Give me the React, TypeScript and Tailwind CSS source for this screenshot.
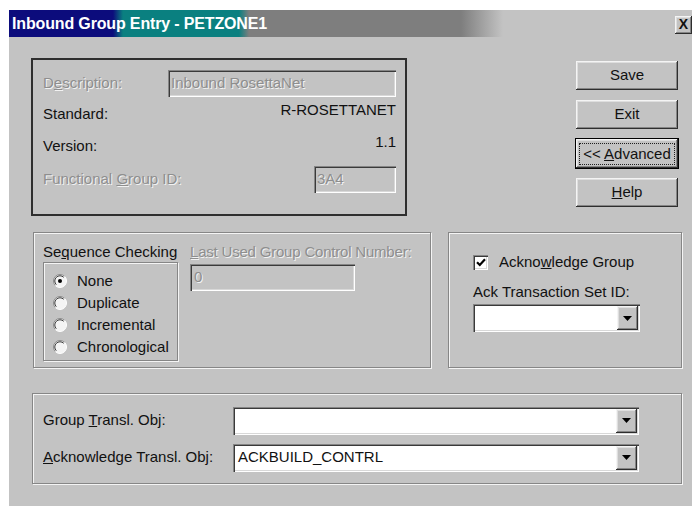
import React from "react";

// Win9x style bevels
const raised =
  "bg-[#c3c3c3] shadow-[inset_-1px_-1px_0_#2e2e2e,inset_1px_1px_0_#f4f4f4,inset_-2px_-2px_0_#858585,inset_2px_2px_0_#dedede]";
const sunken =
  "shadow-[inset_1px_1px_0_#858585,inset_2px_2px_0_#3a3a3a,inset_-1px_-1px_0_#ffffff,inset_-2px_-2px_0_#d8d8d8]";
const etched = "border border-[#868686] shadow-[1px_1px_0_#f4f4f4,inset_1px_1px_0_#f4f4f4]";
const disabledText = "text-[#8e8e8e] [text-shadow:1px_1px_0_#f2f2f2]";

const Btn = ({ children, focused }: { children: React.ReactNode; focused?: boolean }) => (
  <div
    className={`h-[29px] w-[102px] flex items-center justify-center ${raised} ${
      focused ? "outline outline-1 outline-black" : ""
    }`}
  >
    {focused ? (
      <span className="border border-dotted border-[#202020] px-[1px] leading-[20px] w-[96px] text-center">
        {children}
      </span>
    ) : (
      children
    )}
  </div>
);

const Arrow = () => (
  <div className={`h-full w-[21px] flex items-center justify-center ${raised}`}>
    <svg width="9" height="5" viewBox="0 0 9 5">
      <path d="M0 0H9L4.5 5Z" fill="#000" />
    </svg>
  </div>
);

const Combo = ({ value, w }: { value?: string; w: string }) => (
  <div className={`h-[28px] ${w} bg-white ${sunken} flex items-stretch p-[2px]`}>
    <div className="flex-1 flex items-center pl-[3px]">{value}</div>
    <Arrow />
  </div>
);

const Radio = ({ checked, label }: { checked?: boolean; label: string }) => (
  <div className="h-[22px] flex items-center gap-[10px]">
    <svg width="14" height="14" viewBox="0 0 14 14">
      <circle cx="7" cy="7" r="6.5" fill="#f4f4f4" />
      <path d="M2.4 11.6A6.5 6.5 0 0 1 11.6 2.4" stroke="#8a8a8a" strokeWidth="1" fill="none" />
      <path d="M3.3 10.7A5.2 5.2 0 0 1 10.7 3.3" stroke="#3c3c3c" strokeWidth="1" fill="none" />
      <path d="M11.6 2.4A6.5 6.5 0 0 1 2.4 11.6" stroke="#ffffff" strokeWidth="1" fill="none" />
      {checked && <circle cx="7" cy="7" r="2" fill="#000" />}
    </svg>
    <span>{label}</span>
  </div>
);

export default function App() {
  return (
    <div
      className="w-[692px] h-[506px] bg-white pl-[9px] pt-[10px] overflow-hidden text-[15px] text-[#111]"
      style={{ fontFamily: '"Liberation Sans", Arial, sans-serif' }}
    >
      <div className="w-[683px] h-[496px] bg-[#c3c3c3] flex flex-col">
        {/* caption bar */}
        <div className="h-[27px] flex items-center bg-[linear-gradient(to_right,#0c0c7c_0px,#0c0c7c_104px,#0a8080_114px,#0a8080_230px,#7e7e7e_240px,#7e7e7e_452px,#c3c3c3_494px)]">
          <span className="pl-[3px] text-white font-bold text-[16px] tracking-[-0.15px]">
            Inbound Group Entry - PETZONE1
          </span>
          <div
            className={`ml-auto mt-[2px] h-[18px] w-[17px] flex items-center justify-center font-bold text-[14px] ${raised}`}
          >
            X
          </div>
        </div>

        <div className="flex flex-col pl-[22px]">
          {/* header info + buttons */}
          <div className="flex mt-[21px]">
            <div className="w-[376px] h-[158px] border-2 border-[#2e2e2e] pl-[10px] pr-[9px] pt-[10px] flex flex-col">
              <div className="h-[27px] flex items-center justify-between">
                <span className={disabledText}>
                  D<u>e</u>scription:
                </span>
                <div className={`w-[228px] h-[27px] ${sunken} flex items-center pl-[3px] ${disabledText}`}>
                  Inbound RosettaNet
                </div>
              </div>
              <div className="mt-[4px] h-[26px] flex items-center justify-between">
                <span>Standard:</span>
                <span className="-mt-[8px]">R-ROSETTANET</span>
              </div>
              <div className="mt-[6px] h-[26px] flex items-center justify-between">
                <span>Version:</span>
                <span className="-mt-[8px]">1.1</span>
              </div>
              <div className="mt-[7px] h-[27px] flex items-center justify-between">
                <span className={disabledText}>
                  Functional <u>G</u>roup ID:
                </span>
                <div className={`w-[82px] h-[27px] ${sunken} flex items-center pl-[3px] ${disabledText}`}>
                  3A4
                </div>
              </div>
            </div>

            <div className="ml-[169px] pt-[3px] flex flex-col gap-[10px]">
              <Btn>Save</Btn>
              <Btn>Exit</Btn>
              <Btn focused>
                &lt;&lt; <u>A</u>dvanced
              </Btn>
              <Btn>
                <span>
                  <u>H</u>elp
                </span>
              </Btn>
            </div>
          </div>

          {/* sequence checking + acknowledgement */}
          <div className="flex mt-[16px]">
            <div className={`ml-[2px] w-[398px] h-[136px] ${etched} pl-[9px] pt-[10px] flex gap-[12px]`}>
              <div className="w-[135px] flex flex-col">
                <span className="leading-[18px] whitespace-nowrap">
                  Se<u>q</u>uence Checking
                </span>
                <div className={`mt-[1px] h-[99px] ${etched} pl-[9px] pt-[7px] flex flex-col`}>
                  <Radio checked label="None" />
                  <Radio label="Duplicate" />
                  <Radio label="Incremental" />
                  <Radio label="Chronological" />
                </div>
              </div>
              <div className="flex flex-col">
                <span className={`leading-[18px] whitespace-nowrap tracking-[-0.2px] ${disabledText}`}>
                  <u>L</u>ast Used Group Control Number:
                </span>
                <div className={`mt-[3px] w-[165px] h-[27px] ${sunken} flex items-center pl-[4px] ${disabledText}`}>
                  0
                </div>
              </div>
            </div>

            <div className={`ml-[17px] w-[234px] h-[136px] ${etched} pl-[24px] pt-[21px] flex flex-col`}>
              <div className="h-[17px] flex items-center gap-[11px]">
                <div className={`w-[15px] h-[15px] bg-white ${sunken} flex items-center justify-center`}>
                  <svg width="10" height="9" viewBox="0 0 10 9">
                    <path d="M1 4.2L3.8 7L9 1.2" stroke="#000" strokeWidth="2.2" fill="none" />
                  </svg>
                </div>
                <span>
                  Ackno<u>w</u>ledge Group
                </span>
              </div>
              <span className="mt-[12px] leading-[18px]">Ack Transaction Set ID:</span>
              <div className="mt-[3px]">
                <Combo w="w-[167px]" />
              </div>
            </div>
          </div>

          {/* translation objects */}
          <div className={`mt-[25px] ml-[1px] w-[650px] h-[91px] ${etched} pl-[10px] pt-[13px] flex flex-col gap-[10px]`}>
            <div className="h-[27px] flex items-center">
              <span className="w-[190px]">
                Group <u>T</u>ransl. Obj:
              </span>
              <Combo w="w-[406px]" />
            </div>
            <div className="h-[27px] flex items-center">
              <span className="w-[190px]">
                <u>A</u>cknowledge Transl. Obj:
              </span>
              <Combo w="w-[406px]" value="ACKBUILD_CONTRL" />
            </div>
          </div>
        </div>
      </div>
    </div>
  );
}
